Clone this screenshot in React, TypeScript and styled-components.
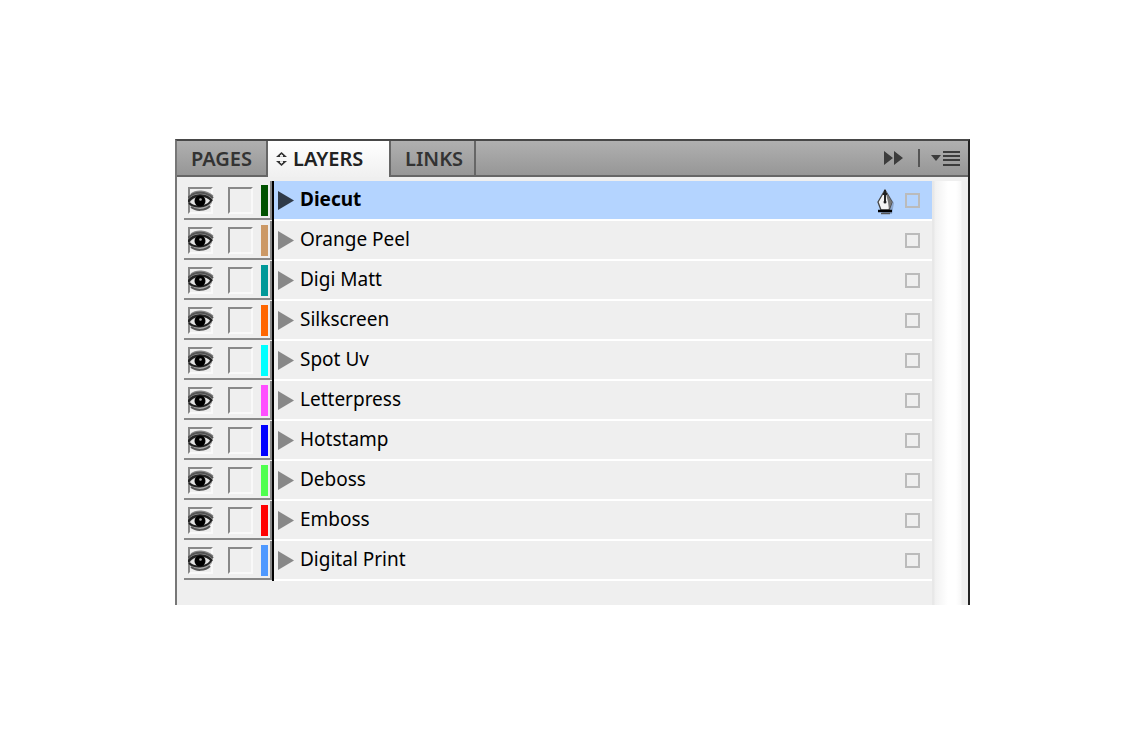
import React, { useState } from "react";
import styled, { createGlobalStyle } from "styled-components";

const GlobalStyle = createGlobalStyle`
  * { box-sizing: border-box; }
  body { margin: 0; background: #fff; font-family: "Noto Sans", "Open Sans", sans-serif; color: #111; }
  button { font: inherit; color: inherit; border: 0; padding: 0; margin: 0; background: none; }
  svg { display: block; }
`;

const Page = styled.main`
  padding: 139px 176px 139px 175px;
`;

const Panel = styled.section`
  border: 2px solid #777;
  border-top-color: #484848;
  border-right-color: #222;
  border-bottom: 0;
  background: #efefef;
`;

const Header = styled.header`
  display: flex;
  height: 36px;
  background: linear-gradient(#b0b0b0, #959595);
`;

const TabList = styled.div`
  display: flex;
`;

const Tab = styled.button<{ $active: boolean; $width: number }>`
  display: flex;
  align-items: center;
  justify-content: flex-start;
  gap: 6px;
  width: ${(p) => p.$width}px;
  padding: ${(p) => (p.$active ? "0 0 0 8px" : "2px 0 0 14px")};
  font-size: 20px;
  line-height: 24px;
  font-weight: 600;
  color: ${(p) => (p.$active ? "#222" : "#333")};
  background: ${(p) => (p.$active ? "linear-gradient(#fff, #f0f0f0)" : "transparent")};
  border-right: 2px solid #666;
  border-bottom: ${(p) => (p.$active ? "0" : "2px solid #666")};
`;

const HeaderTools = styled.div`
  flex: 1;
  display: flex;
  align-items: center;
  justify-content: flex-end;
  padding-right: 8px;
  border-bottom: 2px solid #666;
`;

const ToolButton = styled.button`
  display: flex;
`;

const Divider = styled.span`
  width: 2px;
  height: 18px;
  margin: 0 11px 0 15px;
  background: #555;
`;

const Body = styled.div`
  display: flex;
  padding: 4px 0 0 7px;
`;

const List = styled.ul`
  flex: 1;
  min-width: 0;
  margin: 0;
  padding: 0 0 24px;
  list-style: none;
`;

const Row = styled.li`
  display: flex;
  height: 40px;
`;

const Controls = styled.div`
  display: flex;
  width: 88px;
  padding: 4px 2px 0 4px;
  border-right: 2px solid #888;
  border-bottom: 2px solid #888;
  margin-bottom: 1px;
`;

const Well = styled.button`
  width: 25px;
  height: 27px;
  margin: 2px 15px 0 0;
  border: 2px solid;
  border-color: #888 #f9f9f9 #f9f9f9 #888;
`;

const EyeWell = styled(Well)`
  svg { margin-left: -2px; }
`;

const Swatch = styled.span<{ $color: string }>`
  width: 7px;
  height: 31px;
  margin-left: -7px;
  background: ${(p) => p.$color};
`;

const Entry = styled.div<{ $selected: boolean }>`
  flex: 1;
  display: flex;
  align-items: center;
  min-width: 0;
  padding: 0 12px 2px 4px;
  border-left: 2px solid #000;
  background: ${(p) => (p.$selected ? "#b4d4ff" : "#efefef")};
  box-shadow: inset 0 -2px #fff;
`;

const Toggle = styled.button`
  width: 16px;
  margin-right: 6px;
`;

const Name = styled.span<{ $bold: boolean }>`
  flex: 1;
  padding-bottom: 2px;
  font-size: 19px;
  line-height: 24px;
  font-weight: ${(p) => (p.$bold ? 700 : 400)};
  color: #000;
  white-space: nowrap;
`;

const PenMark = styled.span`
  margin-right: 10px;
  padding-top: 4px;
`;

const Target = styled.button`
  width: 15px;
  height: 15px;
  border: 2px solid #bbb;
`;

const Scrollbar = styled.div`
  width: 36px;
  background: linear-gradient(90deg, #e8e8e8 0 2px, #f1f1f1 3px, #fff 16px, #fff 24px, #f7f7f7 29px, #eee 30px);
`;

const EyeIcon = () => (
  <svg width="26" height="24" viewBox="0 0 26 24" aria-hidden="true">
    <path d="M1 8C5 1 19 0 25 8L24 14C20 20 8 23 2 17Z" fill="#aaa" />
    <path d="M3 5C8 1 18 1 25 7" fill="none" stroke="#888" strokeWidth="1.5" />
    <path d="M0 9C6 2 18 2 25 9" fill="none" stroke="#555" strokeWidth="2" />
    <path d="M2 13C7 7 17 6 23 12C19 18 7 19 2 13Z" fill="#e4e4e4" />
    <path d="M0 13C5 5 18 4 24 12" fill="none" stroke="#222" strokeWidth="2.5" />
    <path d="M1 14C6 19 18 19 23 12" fill="none" stroke="#222" strokeWidth="2" />
    <path d="M3 18C8 22 17 22 22 17" fill="none" stroke="#555" strokeWidth="2" />
    <circle cx="12" cy="12" r="5.5" fill="#000" />
    <circle cx="12.5" cy="10.5" r="1.3" fill="#aaa" />
  </svg>
);

const PenIcon = () => (
  <svg width="18" height="26" viewBox="0 0 18 26" aria-hidden="true">
    <path d="M10 3L17 14L15 25H5Z" fill="#7188ad" opacity=".6" />
    <path d="M8 1L15 13L12 21H4L1 13Z" fill="#f4f4f4" stroke="#444" strokeWidth="1.3" />
    <path d="M8 1L15 13L12 21L11 13Z" fill="#777" />
    <path d="M8 1V13M6 5H10" stroke="#222" strokeWidth="2" />
    <circle cx="8" cy="13" r="1.5" fill="#222" />
    <path d="M1 22H15" stroke="#000" strokeWidth="2.5" />
    <path d="M4 24.5H13" stroke="#555" strokeWidth="1.5" />
  </svg>
);

const layers = [
  { name: "Diecut", color: "#005200" },
  { name: "Orange Peel", color: "#cc9966" },
  { name: "Digi Matt", color: "#009999" },
  { name: "Silkscreen", color: "#ff6600" },
  { name: "Spot Uv", color: "#00ffff" },
  { name: "Letterpress", color: "#ff4fff" },
  { name: "Hotstamp", color: "#0000ff" },
  { name: "Deboss", color: "#4fff4f" },
  { name: "Emboss", color: "#ff0000" },
  { name: "Digital Print", color: "#4f99ff" },
];

const tabs = [
  { label: "PAGES", width: 91 },
  { label: "LAYERS", width: 123 },
  { label: "LINKS", width: 85 },
];

export default function App() {
  const [activeTab, setActiveTab] = useState("LAYERS");
  const [selected, setSelected] = useState("Diecut");

  return (
    <Page>
      <GlobalStyle />
      <Panel>
        <Header>
          <TabList role="tablist">
            {tabs.map((tab) => (
              <Tab
                key={tab.label}
                role="tab"
                aria-selected={activeTab === tab.label}
                $active={activeTab === tab.label}
                $width={tab.width}
                onClick={() => setActiveTab(tab.label)}
              >
                {activeTab === tab.label && (
                  <svg width="11" height="14" viewBox="0 0 11 14" aria-hidden="true">
                    <path d="M0 5H11L5.5 0ZM0 9H11L5.5 14Z" fill="#333" />
                    <path d="M4 4.2H7L5.5 2.8ZM4 9.8H7L5.5 11.2Z" fill="#fff" stroke="#fff" />
                  </svg>
                )}
                {tab.label}
              </Tab>
            ))}
          </TabList>
          <HeaderTools>
            <ToolButton aria-label="Collapse panel">
              <svg width="20" height="14" viewBox="0 0 20 14">
                <path d="M1 0L10 7L1 14ZM11 0L20 7L11 14Z" fill="#3c3c3c" />
              </svg>
            </ToolButton>
            <Divider />
            <ToolButton aria-label="Panel menu">
              <svg width="29" height="16" viewBox="0 0 29 16">
                <path d="M0 5H10L5 11Z" fill="#3c3c3c" />
                <path d="M12 2H29M12 6H29M12 10H29M12 15H29" stroke="#3c3c3c" strokeWidth="2" />
              </svg>
            </ToolButton>
          </HeaderTools>
        </Header>
        <Body>
          <List>
            {layers.map(({ name, color }) => {
              const isSelected = name === selected;
              return (
                <Row key={name} onClick={() => setSelected(name)}>
                  <Controls>
                    <EyeWell aria-label={`Show ${name}`}>
                      <EyeIcon />
                    </EyeWell>
                    <Well aria-label={`Lock ${name}`} />
                    <Swatch $color={color} />
                  </Controls>
                  <Entry $selected={isSelected}>
                    <Toggle aria-label={`Expand ${name}`}>
                      <svg width="16" height="19" viewBox="0 0 16 19">
                        <path d="M0 0L16 9.5L0 19Z" fill={isSelected ? "#2f3a48" : "#888"} />
                      </svg>
                    </Toggle>
                    <Name $bold={isSelected}>{name}</Name>
                    {isSelected && (
                      <PenMark>
                        <PenIcon />
                      </PenMark>
                    )}
                    <Target aria-label={`Select items on ${name}`} />
                  </Entry>
                </Row>
              );
            })}
          </List>
          <Scrollbar />
        </Body>
      </Panel>
    </Page>
  );
}
